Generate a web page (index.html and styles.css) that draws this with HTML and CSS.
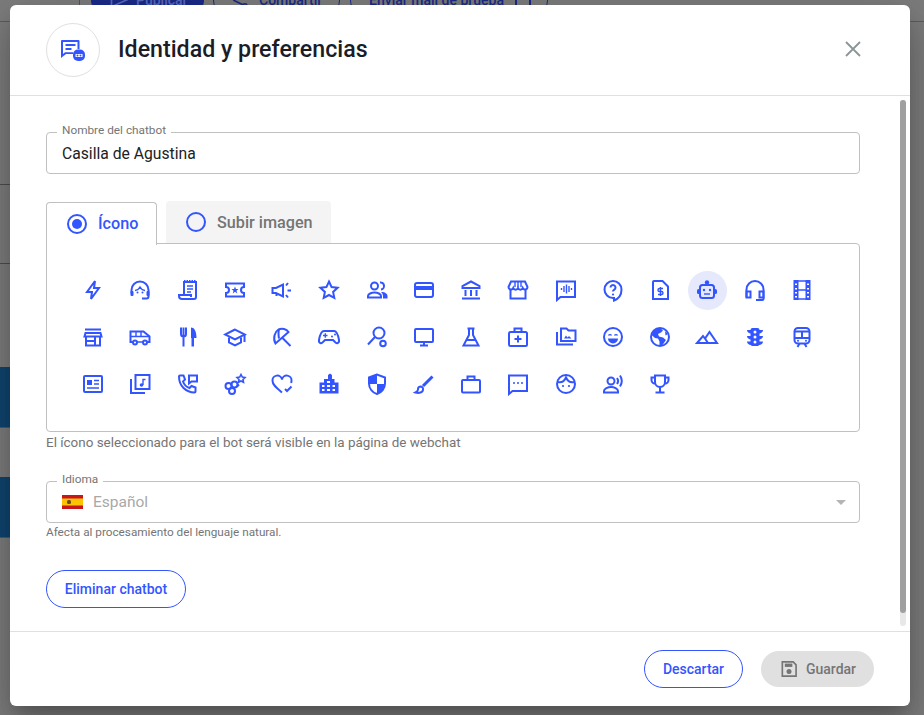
FILE: index.html
```html
<!DOCTYPE html>
<html lang="es">
<head>
<meta charset="utf-8">
<title>Identidad y preferencias</title>
<link rel="stylesheet" href="styles.css">
</head>
<body>
<div class="backdrop">
  <div class="topbar">
    <div class="tools">
      <span class="tool tool-primary"><svg class="tool-ic" viewBox="0 0 24 24" width="20" height="20"><path d="M3 20V4l18 8z"/></svg>Publicar</span>
      <span class="tool tool-share"><svg class="tool-ic" viewBox="0 0 24 24" width="20" height="20"><path d="M5 12l14-7M5 12l14 7"/><circle cx="19" cy="19" r="2.500"/></svg>Compartir</span>
      <span class="tool tool-mail">Enviar mail de prueba<svg class="tool-ic" viewBox="0 0 16 16" width="16" height="16"><path d="M1 0v16M15 0v16"/><circle cx="8" cy="3" r="1"/></svg></span>
    </div>
  </div>
  <div class="rail">
    <div class="rail-row rail-a"></div>
    <div class="rail-row rail-b"></div>
    <div class="rail-gap-a"></div>
    <div class="rail-band"></div>
    <div class="rail-gap-b"></div>
    <div class="rail-band"></div>
  </div>
</div>

<div class="overlay">
  <section class="modal">
    <header class="modal-head">
      <div class="head-left">
        <div class="head-circle">
          <svg class="ic-head" viewBox="0 0 24 24" width="24" height="24">
            <path class="fl" d="M0 3a1 1 0 0 1 1-1h16.500a1 1 0 0 1 1 1v8h-2V4H2v12l2-1.800h8V16H5l-5 4z"/>
            <path class="st" d="M4.500 7h10M4.500 11h6"/>
            <rect class="fl" x="12" y="11.500" width="12" height="11.500" rx="5"/>
            <path class="wh" d="M14.500 16h7v3h-7z"/>
            <circle class="fl" cx="16.500" cy="17.500" r="1"/>
            <circle class="fl" cx="19.500" cy="17.500" r="1"/>
          </svg>
        </div>
        <h1 class="title">Identidad y preferencias</h1>
      </div>
      <svg class="close" viewBox="0 0 24 24" width="24" height="24"><path d="M5 5l14 14M19 5L5 19"/></svg>
    </header>

    <div class="modal-body">
      <div class="scroll-track"><div class="scroll-thumb"></div></div>

      <div class="field">
        <span class="field-label">Nombre del chatbot</span>
        <div class="field-box field-value">Casilla de Agustina</div>
      </div>

      <div class="tabs">
        <div class="tab tab-on"><span class="radio radio-on"></span>Ícono</div>
        <div class="tab tab-off"><span class="radio"></span>Subir imagen</div>
      </div>

      <div class="icon-panel">
        <!-- row 1 -->
        <span class="cell"><svg class="ic" viewBox="0 0 24 24"><path d="M14 3 6 14h5l-1 7 8-11h-5z"/></svg></span>
        <span class="cell"><svg class="ic" viewBox="0 0 24 24"><path d="M3.500 15.500V12a8.500 8.500 0 0 1 17 0v4"/><path d="M20.500 16v2.500a2 2 0 0 1-2 2H14"/><path class="thin" d="M7 12.500c2.500 0 4-1.800 5-3.500 1 1.700 2.500 3.500 5 3.500"/><rect class="fl" x="2.500" y="13" width="3" height="5" rx="1"/><rect class="fl" x="18.500" y="13" width="3" height="5" rx="1"/><circle class="fl" cx="9.500" cy="14.500" r="1"/><circle class="fl" cx="14.500" cy="14.500" r="1"/></svg></span>
        <span class="cell"><svg class="ic" viewBox="0 0 24 24"><path class="dash" d="M8 3h12"/><path d="M8 17V4h12V19a2 2 0 0 1-2 2H6a3 3 0 0 1-3-3v-1h12v2"/><path class="thin" d="M11 8h6M11 11h6M11 14h4"/></svg></span>
        <span class="cell"><svg class="ic" viewBox="0 0 24 24"><path d="M3 5.500h18V9a3 3 0 0 0 0 6v3.500H3V15a3 3 0 0 0 0-6z"/><path class="fl" d="M12 8.500l1 2.600h2.600l-2.100 1.600.8 2.700-2.300-1.600-2.300 1.600.8-2.700-2.100-1.600H11z"/></svg></span>
        <span class="cell"><svg class="ic" viewBox="0 0 24 24"><path d="M2.500 10v5H6l7 3.500v-12L6 10z"/><path d="M6.500 15v3M16 7.500l2-2.500M17.500 12.500H21M16 17l2 2.500"/></svg></span>
        <span class="cell"><svg class="ic" viewBox="0 0 24 24"><path d="M12 3.500l2.600 5.600 6 .7-4.500 4.100 1.200 6L12 17l-5.300 2.900 1.200-6-4.500-4.100 6-.7z"/></svg></span>
        <span class="cell"><svg class="ic" viewBox="0 0 24 24"><circle cx="9.500" cy="8" r="3.500"/><path d="M3 19.500V18c0-2 3.500-3.500 6.500-3.500S16 16 16 18v1.500z"/><path d="M15 4.500a3.500 3.500 0 0 1 1 7"/><path class="fl" d="M18 14c2.500.5 4.500 2 4.500 4v2.500H18V18c0-1.500-1-3-2-4z"/></svg></span>
        <span class="cell"><svg class="ic" viewBox="0 0 24 24"><rect x="3" y="5" width="18" height="14" rx="2"/><rect class="fl" x="3" y="8" width="18" height="4"/></svg></span>
        <span class="cell"><svg class="ic" viewBox="0 0 24 24"><path d="M12 3.500 3.500 8v2h17V8z"/><path d="M6.500 12v6M12 12v6M17.500 12v6M3 20.500h18"/></svg></span>
        <span class="cell"><svg class="ic" viewBox="0 0 24 24"><path d="M4.500 11.500V20.500h15V11.500"/><path d="M5 3.500h14l2.500 5.500a2.500 2.500 0 0 1-4.800 1 2.500 2.500 0 0 1-4.700 0 2.500 2.500 0 0 1-4.700 0 2.500 2.500 0 0 1-4.800-1z"/><path class="thin" d="M9 4v5M12 4v5M15 4v5"/></svg></span>
        <span class="cell"><svg class="ic" viewBox="0 0 24 24"><path d="M3 3.500h18v15.500H6.500L3 22z"/><path class="thin" d="M7.500 10v2M10 8v6M12.500 6.500v9M15 8v6M17.500 10v2"/></svg></span>
        <span class="cell"><svg class="ic" viewBox="0 0 24 24"><path d="M12 3a8.500 8.500 0 0 0 0 17h1v2.500c4-1.500 7.500-5 7.500-11A8.500 8.500 0 0 0 12 3z"/><path d="M9.500 9.500a2.500 2.500 0 1 1 3.800 2.100c-.9.6-1.300 1-1.300 2"/><circle class="fl" cx="12" cy="16.500" r="1.100"/></svg></span>
        <span class="cell"><svg class="ic" viewBox="0 0 24 24"><path d="M6 3h8.500L20 8.500V21H5V4a1 1 0 0 1 1-1z"/><path class="thin" d="M15 10.500h-3.500a1.500 1.500 0 0 0 0 3h2a1.500 1.500 0 0 1 0 3H10M12.500 9v9"/></svg></span>
        <span class="cell cell-on"><svg class="ic" viewBox="0 0 24 24"><rect x="5" y="7" width="14" height="13" rx="2.500"/><circle class="fl" cx="12" cy="4.500" r="2.200"/><rect class="fl" x="2" y="11" width="3" height="5" rx="1.500"/><rect class="fl" x="19" y="11" width="3" height="5" rx="1.500"/><circle class="fl" cx="9" cy="12" r="1.200"/><circle class="fl" cx="15" cy="12" r="1.200"/><path class="thin" d="M9 16h6"/></svg></span>
        <span class="cell"><svg class="ic" viewBox="0 0 24 24"><path d="M3.500 19.500V11.500a8.500 8.500 0 0 1 17 0v9a1.500 1.500 0 0 1-1.500 1.500h-6"/><rect x="3.500" y="13.500" width="4" height="6"/><rect x="16.500" y="13.500" width="4" height="6"/></svg></span>
        <span class="cell"><svg class="ic" viewBox="0 0 24 24"><rect class="fl" x="3.500" y="2" width="5" height="20"/><rect class="fl" x="15.500" y="2" width="5" height="20"/><path class="thin" d="M8 3h8M8 21h8M8 12h8"/><path class="holes" d="M6 5.500v1.500M6 10v1.500M6 14v1.500M6 18v1.500M18 5.500v1.500M18 10v1.500M18 14v1.500M18 18v1.500"/></svg></span>
        <!-- row 2 -->
        <span class="cell"><svg class="ic" viewBox="0 0 24 24"><path d="M4 4.500h16M4.500 8h15l1 3.500h-17z"/><path d="M5 11.500V20.500h14V11.500M5 16h9M14 11.500v9"/></svg></span>
        <span class="cell"><svg class="ic" viewBox="0 0 24 24"><path d="M5 17H2.500V6.500h13l6 5V17H19"/><path class="thin" d="M2.500 11.500h19M8 6.500v5M13 6.500v5M9 17h6"/><circle cx="7" cy="17.500" r="2"/><circle cx="17" cy="17.500" r="2"/></svg></span>
        <span class="cell"><svg class="ic" viewBox="0 0 24 24"><path d="M5 2.500V9a2.500 2.500 0 0 0 5 0V2.500M7.500 2.500V21.500"/><path class="fl" d="M15 2.500c3 0 5.500 3 5.500 10.500h-2.500v8.500h-2.500V13H15z"/></svg></span>
        <span class="cell"><svg class="ic" viewBox="0 0 24 24"><path d="M12 4.500 2 9.500l10 5 10-5z"/><path d="M6 12.500V17.500l6 3 6-3v-5M21.500 10v7"/></svg></span>
        <span class="cell"><svg class="ic" viewBox="0 0 24 24"><path d="M5.500 18.500C2.500 13 5 6.500 8.500 4.500c3.500-1.500 8-.5 10 2.500z"/><path d="M12 12.500l8.500 8.500M9 4.500c-1 3-.5 6 0 9"/></svg></span>
        <span class="cell"><svg class="ic" viewBox="0 0 24 24"><path d="M7 6h10c3 0 4 3.500 5 9 .5 3.500-2.500 4-4 2l-2-2H8l-2 2c-1.500 2-4.500 1.500-4-2 1-5.500 2-9 5-9z"/><path class="thin" d="M6 10.500h4.500M8.300 8.300v4.500"/><circle class="fl" cx="15" cy="11.500" r="1"/><circle class="fl" cx="18" cy="9.500" r="1"/></svg></span>
        <span class="cell"><svg class="ic" viewBox="0 0 24 24"><circle cx="14" cy="8" r="5.500"/><path d="M10 12 3 19.500"/><circle cx="18" cy="18.500" r="2.800"/></svg></span>
        <span class="cell"><svg class="ic" viewBox="0 0 24 24"><rect x="3" y="4" width="18" height="13" rx="1"/><path d="M12 17v3M8 20.500h8"/></svg></span>
        <span class="cell"><svg class="ic" viewBox="0 0 24 24"><path d="M8.500 3.500h7M10 3.500V10L4.500 20.500h15L14 10V3.500M7.500 15h9"/></svg></span>
        <span class="cell"><svg class="ic" viewBox="0 0 24 24"><rect x="3" y="7" width="18" height="14" rx="1.500"/><path d="M8.500 7V3.500h7V7M12 10.500v7M8.500 14h7"/></svg></span>
        <span class="cell"><svg class="ic" viewBox="0 0 24 24"><path d="M7 3.500h5.500l2 2H21.500V16H7z"/><path d="M3 7v12.500h16"/><path class="fl" d="M10 13.500l2-3 1.500 2 1.500-1.500 2.500 2.500z"/></svg></span>
        <span class="cell"><svg class="ic" viewBox="0 0 24 24"><circle cx="12" cy="12" r="9"/><path class="thin" d="M7.500 10.500c.6-1.200 2.400-1.200 3 0M13.500 10.500c.6-1.200 2.400-1.200 3 0"/><path class="fl" d="M7 13.500h10a5 5 0 0 1-10 0z"/></svg></span>
        <span class="cell"><svg class="ic" viewBox="0 0 24 24"><circle cx="12" cy="12" r="9"/><path class="fl" d="M12 3c-4 .5-7 3-8.500 7l3.500 3 3 .5 1.500 3v3.500h3l3.500-5-3-2.500-4-1-1-2.500 3-1.500 2-2zM17 6l3 3-2.500 1.500z"/></svg></span>
        <span class="cell"><svg class="ic" viewBox="0 0 24 24"><path d="M2 18h20L14.500 7 10 13.500 8 11zM10 13.500l3 4.500"/></svg></span>
        <span class="cell"><svg class="ic" viewBox="0 0 24 24"><rect class="fl" x="7.500" y="3" width="9" height="18" rx="2"/><path class="fl" d="M4 5h4v3.500C6 8.500 4 7 4 5zM20 5h-4v3.500c2 0 4-1.500 4-3.500zM4 11h4v3.500c-2 0-4-1.500-4-3.500zM20 11h-4v3.500c2 0 4-1.500 4-3.500zM4 16.500h4V20c-2 0-4-1.500-4-3.500zM20 16.500h-4V20c2 0 4-1.500 4-3.500z"/><circle class="wh" cx="12" cy="7" r="1.500"/><circle class="wh" cx="12" cy="12" r="1.500"/><circle class="wh" cx="12" cy="17" r="1.500"/></svg></span>
        <span class="cell"><svg class="ic" viewBox="0 0 24 24"><rect x="4.500" y="3" width="15" height="15.500" rx="3.500"/><path d="M4.500 6.500h15M4.500 13h15M12 6.500V13M7.500 22l2-3.500M16.500 22l-2-3.500"/><circle class="fl" cx="8" cy="15.800" r="1"/><circle class="fl" cx="16" cy="15.800" r="1"/></svg></span>
        <!-- row 3 -->
        <span class="cell"><svg class="ic" viewBox="0 0 24 24"><rect x="3" y="4" width="18" height="16" rx="1"/><rect class="fl" x="6" y="8" width="5" height="5"/><path class="thin" d="M13 8.500h5M13 12h5M6 16h12"/></svg></span>
        <span class="cell"><svg class="ic" viewBox="0 0 24 24"><rect x="7.500" y="3" width="14" height="14"/><path d="M3 7v14h14"/><circle class="fl" cx="13.500" cy="13" r="1.800"/><path class="thin" d="M15 13V7.500h2.500"/></svg></span>
        <span class="cell"><svg class="ic" viewBox="0 0 24 24"><path d="M4 3.500h3.500L9 7.500l-2 2c1 3 3.500 5.500 6.500 6.500l2-2 4 1.500v4a1 1 0 0 1-1 1C10 20.500 3 14 3 4.500a1 1 0 0 1 1-1z"/><path d="M13 3.500h8v6h-5.500L13 11.500z"/></svg></span>
        <span class="cell"><svg class="ic" viewBox="0 0 24 24"><circle cx="5.500" cy="14" r="3"/><circle cx="11.500" cy="12.500" r="3"/><circle cx="9" cy="19" r="3"/><path d="M14 14.500l2-2"/><path class="thin2" d="M18 2.500l1.300 2.600 2.700.4-2 2 .5 2.800-2.500-1.300-2.500 1.300.5-2.800-2-2 2.700-.4z"/></svg></span>
        <span class="cell"><svg class="ic" viewBox="0 0 24 24"><path d="M12 20.500C6.500 16 2.500 13 2.500 8.800a4.800 4.800 0 0 1 9.500-1.300 4.800 4.800 0 0 1 9.500 1.300c0 .8-.1 1.400-.4 2.200"/><path d="M15 17l2 2 4.500-4.500"/></svg></span>
        <span class="cell"><svg class="ic" viewBox="0 0 24 24"><path class="fl" fill-rule="evenodd" d="M2.500 21.500V10.500h4.500V7h4V3l2-1.500L15 3v4h2.500v3.500h4v11zM5 13v2h2.500v-2zm5 0v2h3v-2zm5.500 0v2H18v-2zM5 17v2h2.500v-2zm5 0v2h3v-2zm5.500 0v2H18v-2zM10 9v2h3V9z"/></svg></span>
        <span class="cell"><svg class="ic" viewBox="0 0 24 24"><path d="M12 2.500 4 5.500v6c0 5 3.500 9 8 10.500 4.500-1.500 8-5.500 8-10.500v-6z"/><path class="fl" d="M12 2.500 4 5.500V12h8zM12 12v10c4.500-1.500 8-5.500 8-10z"/></svg></span>
        <span class="cell"><svg class="ic" viewBox="0 0 24 24"><path class="wide" d="M20.500 4.500 11 14"/><path d="M8.500 14.500A2.800 2.800 0 0 0 6 17.500c0 1.200-1 2.300-2.500 3 3.500 1 7.500 0 7.500-3a2.500 2.500 0 0 0-2.500-3z"/></svg></span>
        <span class="cell"><svg class="ic" viewBox="0 0 24 24"><rect x="3" y="8" width="18" height="12.500" rx="1"/><path d="M8.500 8V4.500h7V8"/></svg></span>
        <span class="cell"><svg class="ic" viewBox="0 0 24 24"><path d="M3 3.500h18v15.500H6.500L3 22z"/><circle class="fl" cx="8" cy="11" r="1"/><circle class="fl" cx="12" cy="11" r="1"/><circle class="fl" cx="16" cy="11" r="1"/></svg></span>
        <span class="cell"><svg class="ic" viewBox="0 0 24 24"><circle cx="12" cy="12" r="9"/><path d="M3.500 10c4 1 7-1 8.500-4.500 1.500 3.500 4.500 5.500 8.500 4.500"/><circle class="fl" cx="9" cy="14" r="1.100"/><circle class="fl" cx="15" cy="14" r="1.100"/></svg></span>
        <span class="cell"><svg class="ic" viewBox="0 0 24 24"><circle cx="10" cy="9" r="3.500"/><path d="M3 20.500V19c0-2.500 4-4 7-4s7 1.500 7 4v1.500z"/><path d="M16 6a5 5 0 0 1 0 6M19 3.500a10 10 0 0 1 0 11"/></svg></span>
        <span class="cell"><svg class="ic" viewBox="0 0 24 24"><path d="M7 3.500h10V10a5 5 0 0 1-10 0z"/><path d="M7 5.500H3.500V8A3.500 3.500 0 0 0 7 11.500M17 5.500h3.500V8a3.500 3.500 0 0 1-3.500 3.500M12 15v5M7.500 20.500h9"/></svg></span>
      </div>
      <p class="hint hint-icon">El ícono seleccionado para el bot será visible en la página de webchat</p>

      <div class="field field-lang">
        <span class="field-label">Idioma</span>
        <div class="field-box field-select">
          <svg class="flag" viewBox="0 0 21 14" width="21" height="14"><rect width="21" height="14" fill="#c8161d"/><rect y="3.500" width="21" height="7" fill="#fcc400"/><rect x="5" y="5" width="4" height="4" rx="1.500" fill="#6d4a1d"/></svg>
          <span class="select-text">Español</span>
          <span class="caret"></span>
        </div>
      </div>
      <p class="hint hint-lang">Afecta al procesamiento del lenguaje natural.</p>

      <button class="btn btn-outline btn-delete" type="button">Eliminar chatbot</button>
    </div>

    <footer class="modal-foot">
      <button class="btn btn-outline btn-discard" type="button">Descartar</button>
      <button class="btn btn-save" type="button">
        <svg viewBox="0 0 24 24" width="20" height="20"><path class="save-body" d="M4 3.500h13l3.500 3.500v13.500H4z"/><rect class="save-fill" x="7" y="5.500" width="9" height="4"/><circle class="save-fill" cx="12" cy="15" r="3"/></svg>
        Guardar
      </button>
    </footer>
  </section>
</div>
</body>
</html>
```

FILE: styles.css
```css
* { box-sizing: border-box; }
html, body { margin: 0; padding: 0; height: 100%; overflow: hidden; }
body {
  position: relative;
  width: 924px;
  height: 715px;
  font-family: Roboto, "Liberation Sans", sans-serif;
  background: #7d7d7d;
}

/* dimmed page behind the dialog */
.backdrop { height: 715px; overflow: hidden; display: flex; flex-direction: column; }
.topbar { height: 22px; padding-left: 79px; border-bottom: 1px solid #5e5e5e; flex: none; }
.tools {
  display: flex; align-items: center; height: 36px; margin-top: -18px;
  padding-left: 11px; border-left: 1px solid #555;
  font-size: 14px; font-weight: 500; color: #1b2a88;
}
.tool { height: 36px; display: flex; align-items: center; border: 1px solid #1b2a88; border-radius: 18px; }
.tool-ic { fill: none; stroke: currentColor; stroke-width: 2; flex: none; }
.tool-primary { width: 113px; padding-left: 17px; gap: 7px; background: #1b2a88; color: #5a6ac0; }
.tool-share { width: 127px; padding-left: 15px; gap: 10px; margin-left: 9px; }
.tool-mail { width: 198px; padding-left: 18px; gap: 11px; margin-left: 10px; }
.rail { width: 40px; flex: none; }
.rail-row { border-bottom: 1px solid #4e4e4e; }
.rail-a { height: 163px; }
.rail-b { height: 79px; }
.rail-gap-a { height: 103px; }
.rail-band { height: 61px; background: #104570; border-bottom: 1px solid #3b5f80; }
.rail-gap-b { height: 49px; }

/* dialog */
.overlay { position: absolute; inset: 0; padding: 5px 14px 9px 10px; }
.modal {
  width: 900px; height: 701px; background: #fff; border-radius: 6px;
  display: flex; flex-direction: column;
  box-shadow: 0 11px 15px -7px rgba(0,0,0,.2), 0 24px 38px 3px rgba(0,0,0,.14), 0 9px 46px 8px rgba(0,0,0,.12);
}
.modal-head {
  height: 91px; flex: none; display: flex; align-items: center; justify-content: space-between;
  padding: 0 45px 0 36px; border-bottom: 1px solid #e0e0e0;
}
.head-left { display: flex; align-items: center; gap: 18px; }
.head-circle {
  width: 54px; height: 54px; border: 1px solid #e0e0e0; border-radius: 50%;
  display: flex; align-items: center; justify-content: center;
}
.ic-head .fl { fill: #3355ff; }
.ic-head .wh { fill: #fff; }
.ic-head .st { fill: none; stroke: #3355ff; stroke-width: 2; }
.title { margin: 0 0 2px; font-size: 23.200px; line-height: 28px; font-weight: 500; color: #1a1c28; }
.close { fill: none; stroke: #8a9696; stroke-width: 1.800; margin-bottom: 2px; }

.modal-body { position: relative; flex: 1; padding: 36px 50px 0 36px; }
.scroll-track {
  position: absolute; top: 4px; right: 4px; width: 6px; height: 526px;
  background: #e8e8e8; border-radius: 3px;
}
.scroll-thumb { height: 513px; background: #a0a0a0; border-radius: 3px; }

.field { position: relative; }
.field-label {
  position: absolute; left: 11px; top: -9px; padding: 0 5px;
  background: #fff; font-size: 11.800px; line-height: 14px; color: #757575;
}
.field-box {
  width: 814px; height: 42px; border: 1px solid #c0c0c0; border-radius: 4px;
  display: flex; align-items: center; padding: 0 15px;
}
.field-value { font-size: 15.700px; color: #212121; }

.tabs { display: flex; align-items: flex-start; gap: 9px; margin-top: 27px; height: 42px; position: relative; z-index: 1; }
.tab { display: flex; align-items: center; font-size: 16.200px; font-weight: 500; }
.tab-on {
  width: 111px; height: 43px; margin-top: 1px; padding: 0 0 2px 20px; gap: 11px;
  background: #fff; color: #3355ff;
  border: 1px solid #c0c0c0; border-bottom: 0; border-radius: 4px 4px 0 0;
}
.tab-on .radio { margin-top: 2px; }
.tab-off {
  width: 165px; height: 42px; padding-left: 20px; gap: 11px;
  background: #f4f4f4; color: #757575; border-radius: 4px 4px 0 0;
}
.radio {
  width: 20px; height: 20px; border: 2px solid #3355ff; border-radius: 50%;
  display: flex; align-items: center; justify-content: center; flex: none;
}
.radio-on::after { content: ""; width: 10px; height: 10px; border-radius: 50%; background: #3355ff; }

.icon-panel {
  width: 814px; height: 189px; border: 1px solid #c0c0c0; border-radius: 0 4px 4px 4px;
  padding: 27px 0 0 26.500px;
  display: grid; grid-template-columns: repeat(16, 39px); grid-auto-rows: 39px;
  column-gap: 8.270px; row-gap: 8px; align-content: start;
}
.cell { display: flex; align-items: center; justify-content: center; border-radius: 50%; }
.cell-on { background: #e5e9fb; }
.ic { width: 24px; height: 24px; margin-top: -1px; fill: none; stroke: #3355ff; stroke-width: 2; }
.ic .fl { fill: #3355ff; stroke: none; }
.ic .wh { fill: #fff; stroke: none; }
.ic .thin { stroke-width: 1.400; }
.ic .thin2 { stroke-width: 1.600; }
.ic .wide { stroke-width: 3; }
.ic .dash { stroke-dasharray: 1.500 1; }
.ic .holes { stroke: #fff; stroke-width: 2; }

.hint { margin: 0; color: #757575; }
.hint-icon { font-size: 13.450px; line-height: 16px; margin-top: 3px; }
.field-lang { margin-top: 30px; }
.field-select { gap: 10px; }
.flag { flex: none; }
.select-text { flex: 1; font-size: 15.500px; color: #a8a8a8; }
.caret {
  width: 0; height: 0; margin-right: -2px;
  border-left: 5px solid transparent; border-right: 5px solid transparent; border-top: 5px solid #b4b4b4;
}
.hint-lang { font-size: 11.750px; line-height: 14px; margin-top: 2px; }

.btn {
  font-family: inherit; font-size: 14px; font-weight: 500;
  border-radius: 19px; cursor: pointer; display: flex; align-items: center; justify-content: center;
}
.btn-outline { height: 38px; background: #fff; border: 1px solid #3355ff; color: #3355ff; }
.btn-delete { width: 140px; margin-top: 31px; }
.btn-discard { width: 99px; }
.btn-save {
  width: 113px; height: 36px; border: 0; background: #e0e0e0; color: #757575; gap: 7px;
}
.save-body { fill: none; stroke: #757575; stroke-width: 2; }
.save-fill { fill: #757575; }

.modal-foot {
  height: 75px; flex: none; border-top: 1px solid #e0e0e0;
  display: flex; align-items: center; justify-content: flex-end; gap: 18px; padding-right: 36px;
}
```
